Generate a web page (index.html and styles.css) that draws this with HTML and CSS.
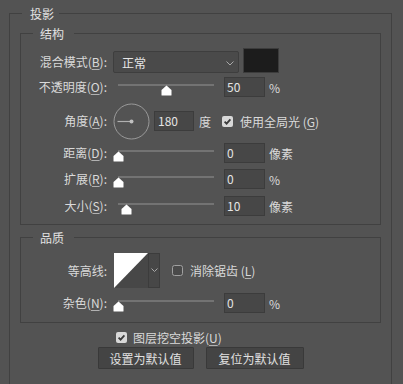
FILE: index.html
```html
<!DOCTYPE html>
<html lang="zh">
<head>
<meta charset="utf-8">
<link rel="stylesheet" href="styles.css">
</head>
<body>
<fieldset class="panel">
  <legend class="panel-title">投影</legend>

  <fieldset class="group">
    <legend class="group-title">结构</legend>

    <div class="row row-mode">
      <span class="lbl lbl-tall">混合模式(<u>B</u>):</span>
      <div class="select"><span>正常</span>
        <svg class="chev" width="8" height="5" viewBox="0 0 8 5"><path d="M0.5 0.5 L4 4 L7.5 0.5" fill="none" stroke="#a8a8a8" stroke-width="1"/></svg>
      </div>
      <div class="swatch"></div>
    </div>

    <div class="row row-opacity">
      <span class="lbl">不透明度(<u>O</u>):</span>
      <div class="slider"><div class="track"></div><div class="rail"><svg class="thumb" style="left:50%" width="11" height="11" viewBox="0 0 11 11"><path d="M5.5 0.5 L10.5 5 V10 Q10.5 10.5 10 10.5 H1 Q0.5 10.5 0.5 10 V5 Z" fill="#fff"/></svg></div></div>
      <div class="num">50</div>
      <span class="unit">%</span>
    </div>

    <div class="row row-angle">
      <span class="lbl">角度(<u>A</u>):</span>
      <svg class="dial" width="37" height="37" viewBox="0 0 37 37"><circle cx="18.5" cy="18.5" r="17.5" fill="none" stroke="#9a9a9a" stroke-width="1"/><line x1="4.5" y1="18.5" x2="18.5" y2="18.5" stroke="#b0b0b0" stroke-width="1.2"/><circle cx="18.5" cy="18.5" r="2" fill="#c0c0c0"/></svg>
      <div class="num num-angle">180</div>
      <span class="unit unit-deg">度</span>
      <svg class="check check-global" width="11" height="11" viewBox="0 0 11 11"><rect x="0" y="0" width="11" height="11" rx="2" fill="#d8d8d8"/><path d="M2.6 5.6 L4.6 7.6 L8.4 3.4" fill="none" stroke="#3a3a3a" stroke-width="1.8"/></svg>
      <span class="check-text">使用全局光 (<u>G</u>)</span>
    </div>

    <div class="row row-dist">
      <span class="lbl">距离(<u>D</u>):</span>
      <div class="slider"><div class="track"></div><div class="rail"><svg class="thumb" style="left:0%" width="11" height="11" viewBox="0 0 11 11"><path d="M5.5 0.5 L10.5 5 V10 Q10.5 10.5 10 10.5 H1 Q0.5 10.5 0.5 10 V5 Z" fill="#fff"/></svg></div></div>
      <div class="num">0</div>
      <span class="unit">像素</span>
    </div>

    <div class="row row-spread">
      <span class="lbl">扩展(<u>R</u>):</span>
      <div class="slider"><div class="track"></div><div class="rail"><svg class="thumb" style="left:0%" width="11" height="11" viewBox="0 0 11 11"><path d="M5.5 0.5 L10.5 5 V10 Q10.5 10.5 10 10.5 H1 Q0.5 10.5 0.5 10 V5 Z" fill="#fff"/></svg></div></div>
      <div class="num">0</div>
      <span class="unit">%</span>
    </div>

    <div class="row row-size">
      <span class="lbl">大小(<u>S</u>):</span>
      <div class="slider"><div class="track"></div><div class="rail"><svg class="thumb" style="left:9%" width="11" height="11" viewBox="0 0 11 11"><path d="M5.5 0.5 L10.5 5 V10 Q10.5 10.5 10 10.5 H1 Q0.5 10.5 0.5 10 V5 Z" fill="#fff"/></svg></div></div>
      <div class="num">10</div>
      <span class="unit">像素</span>
    </div>
  </fieldset>

  <fieldset class="group group-quality">
    <legend class="group-title">品质</legend>

    <div class="row row-contour">
      <span class="lbl">等高线:</span>
      <div class="contour">
        <svg class="contour-preview" width="34" height="35" viewBox="0 0 34 35"><rect width="34" height="35" fill="#474747"/><polygon points="0,0 34,0 0,35" fill="#ffffff"/></svg>
        <div class="contour-drop"><svg width="7" height="5" viewBox="0 0 7 5"><path d="M0.5 0.5 L3.5 3.5 L6.5 0.5" fill="none" stroke="#a8a8a8" stroke-width="1"/></svg></div>
      </div>
      <svg class="check check-aa" width="11" height="11" viewBox="0 0 11 11"><rect x="0.5" y="0.5" width="10" height="10" rx="2" fill="#4a4a4a" stroke="#a0a0a0" stroke-width="1"/></svg>
      <span class="check-text">消除锯齿 (<u>L</u>)</span>
    </div>

    <div class="row row-noise">
      <span class="lbl">杂色(<u>N</u>):</span>
      <div class="slider"><div class="track"></div><div class="rail"><svg class="thumb" style="left:0%" width="11" height="11" viewBox="0 0 11 11"><path d="M5.5 0.5 L10.5 5 V10 Q10.5 10.5 10 10.5 H1 Q0.5 10.5 0.5 10 V5 Z" fill="#fff"/></svg></div></div>
      <div class="num">0</div>
      <span class="unit">%</span>
    </div>
  </fieldset>

  <div class="row row-knockout">
    <svg class="check" width="11" height="11" viewBox="0 0 11 11"><rect x="0" y="0" width="11" height="11" rx="2" fill="#d8d8d8"/><path d="M2.6 5.6 L4.6 7.6 L8.4 3.4" fill="none" stroke="#3a3a3a" stroke-width="1.8"/></svg>
    <span class="check-text">图层挖空投影(<u>U</u>)</span>
  </div>

  <div class="buttons">
    <button class="btn btn-set">设置为默认值</button>
    <button class="btn btn-reset">复位为默认值</button>
  </div>
</fieldset>
</body>
</html>
```

FILE: styles.css
```css
* { box-sizing: border-box; }

html, body {
  margin: 0;
  padding: 0;
  background: #535353;
  overflow: hidden;
}

body {
  font-family: "Noto Sans CJK SC", "Noto Sans", sans-serif;
  font-size: 12px;
  color: #dadada;
  height: 384px;
}

u {
  text-decoration: underline;
  text-underline-offset: 2px;
  text-decoration-thickness: 1px;
  text-decoration-color: rgba(218, 218, 218, 0.7);
}

fieldset {
  margin: 0;
  min-inline-size: 0;
}

legend {
  line-height: 17px;
  height: 17px;
  font-size: 12px;
  color: #e2e2e2;
}

.panel {
  margin: 5px 0 0 9px;
  width: 383px;
  height: 379px;
  padding: 3px 10px 0 10px;
  border: 1px solid #414141;
  border-bottom: 0;
}

.panel-title {
  padding: 0 5px 0 8px;
  margin-left: 2px;
}

.group {
  width: 361px;
  padding: 0 0 8px 0;
  border: 1px solid #414141;
}

.group-title {
  padding: 0 10px 0 7px;
  margin-left: 12px;
}

.group-quality {
  margin-top: 4px;
  padding-bottom: 9px;
}

.row {
  display: flex;
  align-items: center;
}

.lbl {
  flex: none;
  width: 86px;
  margin-right: 6px;
  text-align: right;
  white-space: nowrap;
  line-height: 16px;
}

.row-mode {
  margin-top: 6px;
  height: 25px;
  align-items: flex-end;
}

.lbl-tall {
  line-height: 22px;
  height: 22px;
}

.select {
  width: 126px;
  height: 22px;
  border: 1px solid #3e3e3e;
  border-radius: 2px;
  background: #4a4a4a;
  padding: 0 4px 0 8px;
  display: flex;
  align-items: center;
  justify-content: space-between;
  color: #e6e6e6;
}

.chev { margin-top: 2px; }

.swatch {
  width: 36px;
  height: 25px;
  margin-left: 4px;
  background: #1c1c1c;
  border: 1px solid #3c3c3c;
}

.row-opacity { margin-top: 4px; height: 20px; }
.row-angle { margin-top: 6px; height: 36px; }
.row-dist { margin-top: 4px; height: 20px; }
.row-spread { margin-top: 6px; height: 20px; }
.row-size { margin-top: 7px; height: 20px; }

.slider {
  position: relative;
  flex: none;
  width: 106px;
  height: 20px;
  margin-right: 5px;
}

.track {
  position: absolute;
  left: 5px;
  right: 5px;
  top: 7px;
  height: 2px;
  background: #737373;
}

.rail {
  position: absolute;
  left: 5px;
  right: 5px;
  top: 8px;
  height: 11px;
}

.thumb {
  position: absolute;
  top: 0;
  margin-left: -5.5px;
  display: block;
}

.num {
  flex: none;
  width: 41px;
  height: 20px;
  line-height: 18px;
  border: 1px solid #3c3c3c;
  background: #474747;
  padding-left: 2px;
  color: #e4e4e4;
}

.unit {
  margin-left: 4px;
}

.dial {
  flex: none;
  display: block;
}

.num-angle {
  width: 40px;
  margin-left: 4px;
  padding-left: 3px;
}

.unit-deg { margin-left: 5px; }

.check {
  flex: none;
  display: block;
}

.check-global { margin-left: 11px; }

.check-text {
  margin-left: 7px;
  white-space: nowrap;
}

.row-contour {
  margin-top: 7px;
  height: 35px;
}

.row-contour .lbl { margin-right: 7px; }

.contour {
  display: flex;
  height: 35px;
  width: 46px;
  flex: none;
}

.contour-preview {
  display: block;
  flex: none;
}

.contour-drop {
  width: 12px;
  height: 35px;
  background: #474747;
  border: 1px solid #3c3c3c;
  display: flex;
  align-items: center;
  justify-content: center;
}

.check-aa { margin-left: 12px; }

.row-noise {
  margin-top: 5px;
  height: 20px;
}

.row-knockout {
  margin-top: 6px;
  height: 16px;
  padding-left: 96px;
}

.row-knockout .check-text { margin-left: 6px; }

.buttons {
  display: flex;
  justify-content: center;
  gap: 12px;
  margin-top: 2px;
}

.btn {
  height: 22px;
  padding: 0;
  font-family: "Noto Sans CJK SC", sans-serif;
  font-size: 12px;
  color: #e0e0e0;
  background: #444444;
  border: 1px solid #393939;
  border-radius: 1px;
}

.btn-set { width: 96px; }
.btn-reset { width: 98px; }
```
